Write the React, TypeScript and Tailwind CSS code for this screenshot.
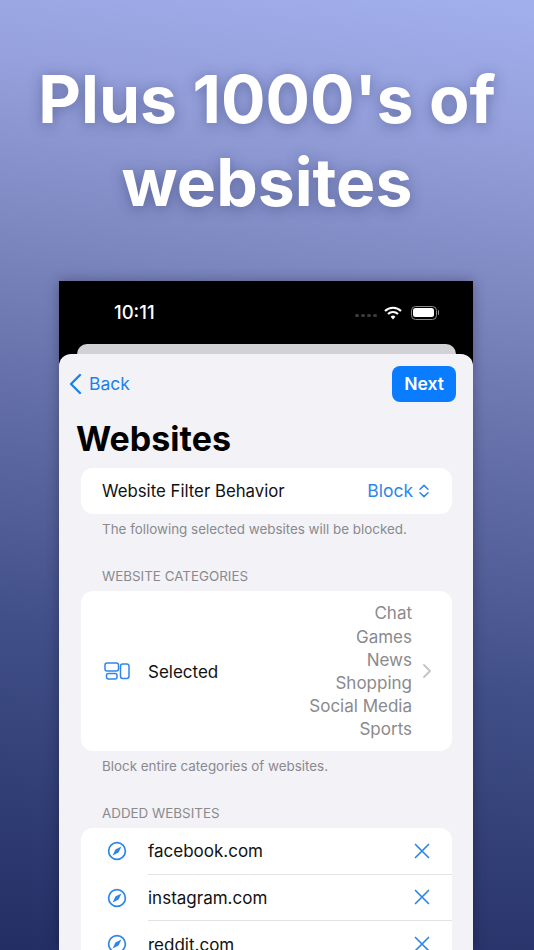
const sites = ['facebook.com', 'instagram.com', 'reddit.com'];
const categories = ['Chat', 'Games', 'News', 'Shopping', 'Social Media', 'Sports'];

function CategoriesIcon() {
  return (
    <svg width="26" height="18" viewBox="0 0 26 18" fill="none" stroke="#2f86e8" strokeWidth="1.5">
      <rect x="1" y="1" width="13.5" height="8" rx="2" />
      <rect x="2.5" y="11.5" width="10.5" height="5.5" rx="2" />
      <rect x="16.5" y="2" width="8.5" height="14.5" rx="2.2" />
    </svg>
  );
}

function Chevrons() {
  return (
    <svg width="12" height="14" viewBox="0 0 12 14" fill="none" stroke="#2f86e8" strokeWidth="1.5" strokeLinecap="round" strokeLinejoin="round">
      <path d="M2 5.2 6 1.4l4 3.8" />
      <path d="M2 8.8l4 3.8 4-3.8" />
    </svg>
  );
}

function BackChevron() {
  return (
    <svg width="14" height="22" viewBox="0 0 14 22" fill="none" stroke="#1a82ea" strokeWidth="2.3" strokeLinecap="round" strokeLinejoin="round">
      <path d="M12 2 3 11l9 9" />
    </svg>
  );
}

function RowChevron() {
  return (
    <svg width="10" height="16" viewBox="0 0 10 16" fill="none" stroke="#c4c4c7" strokeWidth="1.8" strokeLinecap="round" strokeLinejoin="round">
      <path d="M2 2l6 6-6 6" />
    </svg>
  );
}

function CompassIcon() {
  return (
    <svg width="20" height="20" viewBox="0 0 20 20" className="shrink-0">
      <circle cx="10" cy="10" r="8.4" fill="none" stroke="#2f86e8" strokeWidth="1.7" />
      <path d="M14.4 5.6 11.6 11.6 5.6 14.4 8.4 8.4z" fill="#2f86e8" />
    </svg>
  );
}

function CloseIcon() {
  return (
    <svg width="18" height="18" viewBox="0 0 18 18" fill="none" stroke="#2f86e8" strokeWidth="1.7" strokeLinecap="round" className="shrink-0">
      <path d="M2.5 2.5l13 13M15.5 2.5l-13 13" />
    </svg>
  );
}

function StatusIcons() {
  return (
    <div className="flex items-center">
      <div className="flex gap-[2px] mr-[7px] mt-[5px]">
        <span className="w-[4px] h-[3px] rounded-full bg-[#3c3c3c]" />
        <span className="w-[4px] h-[3px] rounded-full bg-[#3c3c3c]" />
        <span className="w-[4px] h-[3px] rounded-full bg-[#3c3c3c]" />
        <span className="w-[4px] h-[3px] rounded-full bg-[#3c3c3c]" />
      </div>
      <svg width="18" height="14" viewBox="0 0 18 14" fill="none" stroke="white" strokeWidth="2.2">
        <path d="M1 5a11.5 11.5 0 0 1 16 0" />
        <path d="M4 8a7.2 7.2 0 0 1 10 0" />
        <path d="M9 13.4 6.6 10.8a3.4 3.4 0 0 1 4.8 0z" fill="white" stroke="none" />
      </svg>
      <div className="ml-[9px] w-[26px] h-[14px] rounded-[4.5px] border border-[#8a8a8a] p-[1.5px]">
        <div className="w-full h-full rounded-[2.5px] bg-white" />
      </div>
      <span className="ml-[1px] w-[1.5px] h-[5px] rounded-r bg-[#8a8a8a]" />
    </div>
  );
}

export default function App() {
  return (
    <div className="w-[534px] h-[950px] overflow-hidden flex flex-col bg-[linear-gradient(188deg,#a2b0ee_0%,#939ed9_15%,#7f89c2_28%,#5f6ba4_48%,#414f88_68%,#222e64_100%)] font-['Inter','Noto_Sans',sans-serif]">
      <h1 className="shrink-0 pt-[58px] h-[281px] text-center text-white font-bold text-[66px] leading-[83px] [text-shadow:0_2px_14px_rgba(40,50,100,0.45)]">
        Plus 1000's of
        <br />
        websites
      </h1>

      <div className="ml-[59px] w-[414px] h-[669px] shrink-0 flex flex-col bg-black shadow-[0_0_12px_rgba(0,0,0,0.3)]">
        {/* status bar */}
        <div className="h-[63px] shrink-0 flex items-center justify-between pl-[55px] pr-[34px]">
          <span className="text-white text-[18.5px] font-medium">10:11</span>
          <StatusIcons />
        </div>
        <div className="ml-[18px] mr-[17px] h-[10px] shrink-0 rounded-t-[10px] bg-[#d1d1d6]" />

        {/* sheet */}
        <div className="flex-1 rounded-t-[12px] bg-[#f2f2f7] overflow-hidden">
          <div className="h-[60px] pt-[12px] pl-[9px] pr-[17px] flex items-start justify-between">
            <div className="h-[36px] flex items-center text-[#1a82ea] text-[17.5px]">
              <BackChevron />
              <span className="ml-[7px]">Back</span>
            </div>
            <button className="w-[64px] h-[36px] rounded-[8px] bg-[#0a7cff] text-white text-[17.5px] font-semibold">Next</button>
          </div>

          <h2 className="pl-[17px] h-[54px] leading-[50px] text-black text-[34px] font-bold">Websites</h2>

          <div className="ml-[22px] mr-[21px]">
            <div className="h-[46px] rounded-[12px] bg-white pl-[21px] pr-[22px] flex items-center justify-between">
              <span className="pt-[2px] text-[16.8px] text-[#111]">Website Filter Behavior</span>
              <span className="flex items-center gap-[5px] text-[17.5px] text-[#2f86e8]">
                Block <Chevrons />
              </span>
            </div>
            <p className="pl-[21px] mt-[6px] h-[18px] leading-[18px] text-[13.4px] text-[#8a8a8e]">The following selected websites will be blocked.</p>

            <p className="pl-[21px] mt-[29px] h-[18px] leading-[18px] text-[13.4px] text-[#8a8a8e]">WEBSITE CATEGORIES</p>
            <div className="mt-[6px] h-[160px] rounded-[12px] bg-white flex items-center pl-[23px] pr-[20px]">
              <CategoriesIcon />
              <span className="ml-[18px] pt-[3px] text-[17px] text-[#111]">Selected</span>
              <div className="ml-auto pt-[2px] text-right text-[17px] leading-[23.2px] text-[#8a8a8e]">
                {categories.map((c) => (
                  <div key={c}>{c}</div>
                ))}
              </div>
              <span className="ml-[10px]">
                <RowChevron />
              </span>
            </div>
            <p className="pl-[21px] mt-[6px] h-[18px] leading-[18px] text-[13.4px] text-[#8a8a8e]">Block entire categories of websites.</p>

            <p className="pl-[21px] mt-[29px] h-[18px] leading-[18px] text-[13.4px] text-[#8a8a8e]">ADDED WEBSITES</p>
            <div className="mt-[6px] rounded-[12px] bg-white">
              {sites.map((s, i) => (
                <div key={s} className="h-[46.5px] flex items-center">
                  <span className="ml-[26px]">
                    <CompassIcon />
                  </span>
                  <div className={'ml-[21px] flex-1 h-full flex items-center pr-[21px] ' + (i < 2 ? 'border-b border-[#e3e3e6]' : '')}>
                    <span className="pt-[2px] text-[17px] text-[#111]">{s}</span>
                    <span className="ml-auto">
                      <CloseIcon />
                    </span>
                  </div>
                </div>
              ))}
            </div>
          </div>
        </div>
      </div>
    </div>
  );
}
